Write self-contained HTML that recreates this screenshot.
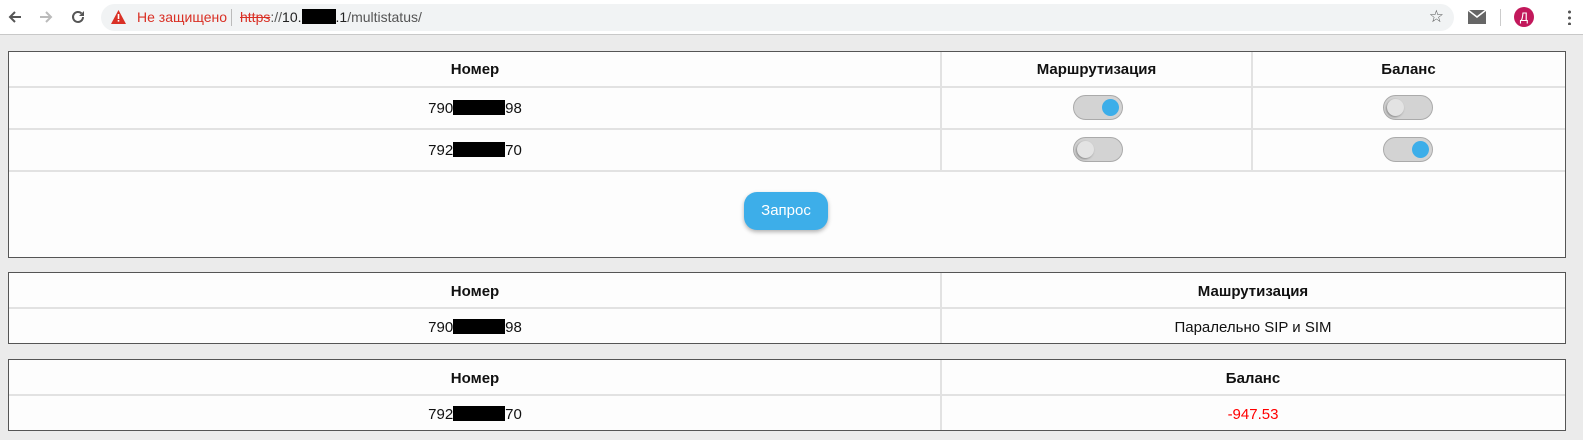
<!DOCTYPE html>
<html><head><meta charset="utf-8"><style>
*{margin:0;padding:0;box-sizing:border-box}
body{width:1583px;height:440px;background:#ebebeb;font-family:"Liberation Sans",Arial,sans-serif;position:relative;overflow:hidden}
.bar{position:absolute;left:0;top:0;width:1583px;height:35px;background:#fff;border-bottom:1px solid #c8c8c8}
.omni{position:absolute;left:101px;top:4px;width:1353px;height:27px;background:#f1f3f4;border-radius:14px}
.t{position:absolute;left:8px;width:1558px;background:#fdfdfd;border:1px solid #555}
.c{position:absolute;text-align:center;font-size:15px;color:#111}
.h{font-weight:bold}
.hl{position:absolute;left:0;right:0;height:2px;background:#e2e2e2}
.vl{position:absolute;width:2px;background:#e2e2e2}
.r{display:inline-block;width:52px;height:15px;background:#000;vertical-align:-2px}
.sw{position:absolute;width:50px;height:25px;border-radius:13px;background:#d3d3d3;border:1px solid #aaa}
.sw i{position:absolute;top:3px;width:17px;height:17px;border-radius:50%}
.on i{right:3px;background:#3daee9}
.off i{left:3px;background:#e3e3e3;box-shadow:-1px 1px 2px #888}
</style></head><body>
<div class="bar">
<svg style="position:absolute;left:6px;top:8px" width="18" height="18" viewBox="0 0 18 18"><path d="M15 9H4M9 4L4 9l5 5" stroke="#555" stroke-width="2" fill="none"/></svg>
<svg style="position:absolute;left:37px;top:8px" width="18" height="18" viewBox="0 0 18 18"><path d="M3 9h11M9 4l5 5-5 5" stroke="#bbb" stroke-width="2" fill="none"/></svg>
<svg style="position:absolute;left:69px;top:8px" width="18" height="18" viewBox="0 0 18 18"><path d="M14 9a5 5 0 1 1-1.5-3.6" stroke="#555" stroke-width="2" fill="none"/><path d="M15 3v5h-5z" fill="#555"/></svg>
<div class="omni">
<svg style="position:absolute;left:10px;top:6px" width="15" height="14" viewBox="0 0 15 14"><path d="M7.5 0L15 14H0z" fill="#d93025"/><rect x="6.7" y="4" width="1.6" height="5" fill="#fff"/><rect x="6.7" y="10" width="1.6" height="1.6" fill="#fff"/></svg>
<span style="position:absolute;left:36px;top:5px;font-size:14px;color:#d93025">Не защищено</span>
<span style="position:absolute;left:130px;top:5px;width:1px;height:17px;background:#bbb"></span>
<span style="position:absolute;left:139px;top:5px;font-size:14px;color:#555"><s style="color:#d93025">https</s>://<span style="color:#222">10.<span style="display:inline-block;width:34px;height:15px;background:#000;vertical-align:-2px"></span>.1</span>/multistatus/</span>
<span style="position:absolute;right:10px;top:3px;font-size:17px;color:#555">☆</span>
</div>
<svg style="position:absolute;left:1468px;top:10px" width="18" height="14" viewBox="0 0 18 14"><rect width="18" height="14" fill="#666"/><path d="M0 0l9 7 9-7" stroke="#fff" stroke-width="1.5" fill="none"/></svg>
<span style="position:absolute;left:1500px;top:9px;width:1px;height:17px;background:#ccc"></span>
<span style="position:absolute;left:1514px;top:7px;width:20px;height:20px;border-radius:50%;background:#c2185b;color:#fff;font-size:12px;text-align:center;line-height:20px">Д</span>
<span style="position:absolute;left:1568px;top:9px;width:3px;height:16px;background:radial-gradient(circle,#555 1.4px,transparent 1.6px) 0 0/3px 6px"></span>
</div>

<div class="t" style="top:51px;height:207px">
<div class="c h" style="left:0;width:932px;top:9px">Номер</div>
<div class="c h" style="left:932px;width:311px;top:9px">Маршрутизация</div>
<div class="c h" style="left:1243px;width:313px;top:9px">Баланс</div>
<div class="hl" style="top:34px"></div><div class="hl" style="top:76px"></div><div class="hl" style="top:118px"></div>
<div class="vl" style="left:931px;top:0;height:120px"></div><div class="vl" style="left:1242px;top:0;height:120px"></div>
<div class="c" style="left:0;width:932px;top:48px">790<span class="r"></span>98</div>
<div class="c" style="left:0;width:932px;top:90px">792<span class="r"></span>70</div>
<div class="sw on" style="left:1064px;top:43px"><i></i></div>
<div class="sw off" style="left:1374px;top:43px"><i></i></div>
<div class="sw off" style="left:1064px;top:85px"><i></i></div>
<div class="sw on" style="left:1374px;top:85px"><i></i></div>
<div style="position:absolute;left:735px;top:140px;width:84px;height:38px;border-radius:13px;background:#3daee9;color:#fff;font-size:15px;text-align:center;line-height:38px;box-shadow:0 2px 4px rgba(0,0,0,.3)">Запрос</div>
</div>

<div class="t" style="top:272px;height:72px">
<div class="c h" style="left:0;width:932px;top:10px">Номер</div>
<div class="c h" style="left:932px;width:624px;top:10px">Машрутизация</div>
<div class="hl" style="top:34px"></div><div class="vl" style="left:931px;top:0;height:70px"></div>
<div class="c" style="left:0;width:932px;top:46px">790<span class="r"></span>98</div>
<div class="c" style="left:932px;width:624px;top:46px">Паралельно SIP и SIM</div>
</div>

<div class="t" style="top:359px;height:72px">
<div class="c h" style="left:0;width:932px;top:10px">Номер</div>
<div class="c h" style="left:932px;width:624px;top:10px">Баланс</div>
<div class="hl" style="top:34px"></div><div class="vl" style="left:931px;top:0;height:70px"></div>
<div class="c" style="left:0;width:932px;top:46px">792<span class="r"></span>70</div>
<div class="c" style="left:932px;width:624px;top:46px;color:#f00">-947.53</div>
</div>
</body></html>
